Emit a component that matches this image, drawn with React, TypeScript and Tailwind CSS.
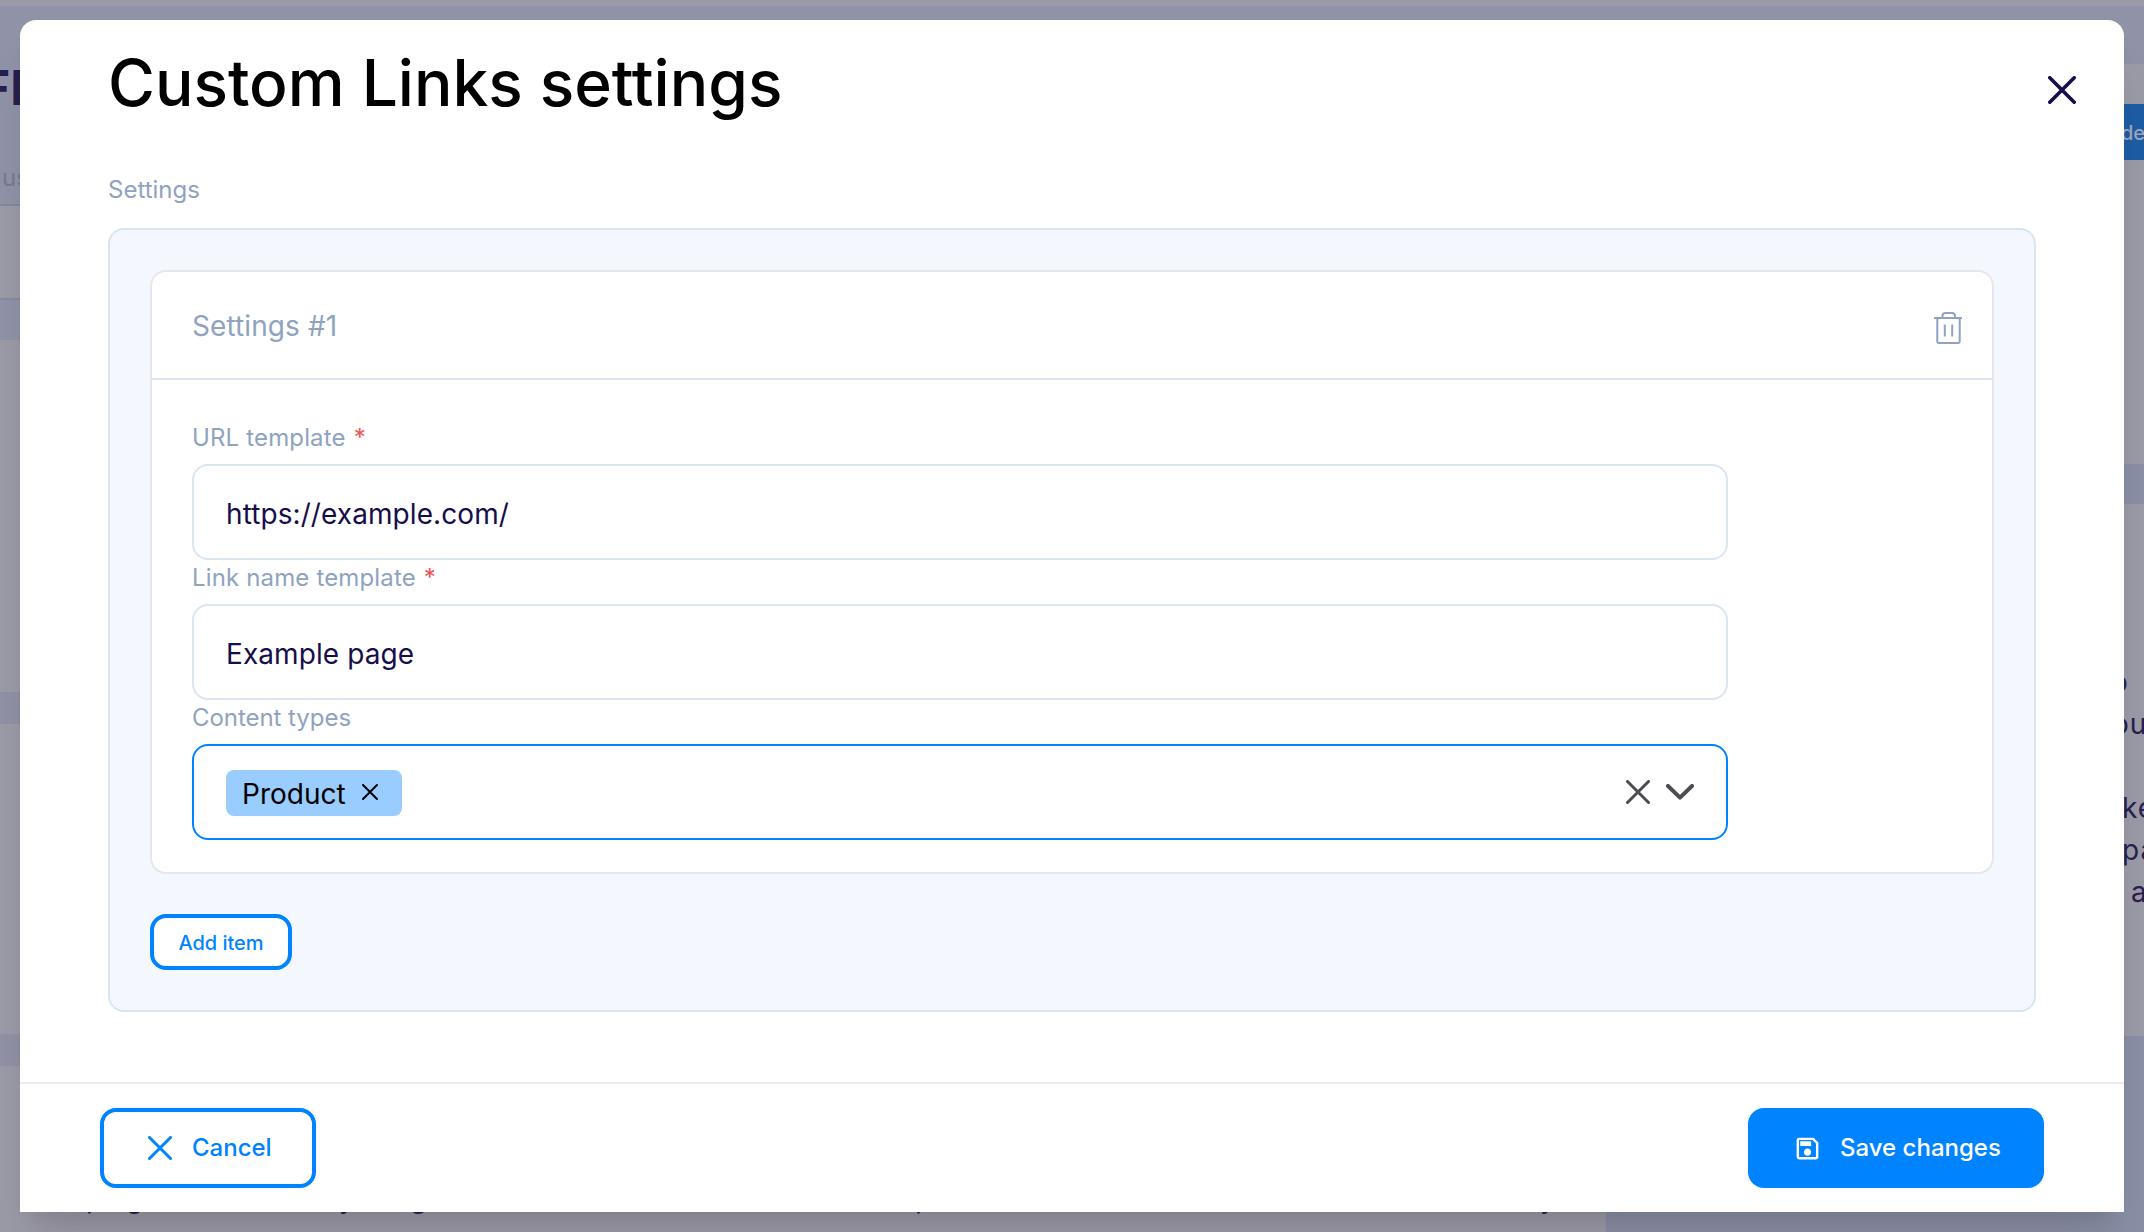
import { MdOutlineSave } from "react-icons/md";

function Cross({ size, stroke }: { size: number; stroke: number }) {
  const a = stroke / 2;
  const b = size - a;
  return (
    <svg width={size} height={size} viewBox={`0 0 ${size} ${size}`} fill="none" stroke="currentColor" strokeWidth={stroke} strokeLinecap="round" className="block shrink-0">
      <path d={`M${a} ${a}L${b} ${b}M${b} ${a}L${a} ${b}`} />
    </svg>
  );
}

function Trash() {
  return (
    <svg width="28" height="32" viewBox="0 0 28 32" fill="none" stroke="currentColor" strokeWidth="2" className="block shrink-0">
      <path d="M0 6H28" />
      <path d="M8.5 6V4a3 3 0 0 1 3-3h6.5a3 3 0 0 1 3 3v2" />
      <path d="M3.3 6V29.5a1.5 1.5 0 0 0 1.5 1.5H24.2a1.5 1.5 0 0 0 1.5-1.5V6" />
      <path d="M10.8 12.5V24.5M18.2 12.5V24.5" />
    </svg>
  );
}

function Chevron() {
  return (
    <svg width="28" height="16" viewBox="0 0 28 16" fill="none" stroke="currentColor" strokeWidth="4" strokeLinecap="round" strokeLinejoin="round" className="block shrink-0">
      <path d="M2 2L14 13.6L26 2" />
    </svg>
  );
}

function Label({ text, required }: { text: string; required?: boolean }) {
  return (
    <div className="h-11 pt-[2px] text-2xl leading-8 text-[#8fa3bf]">
      <span className={required ? "tracking-[0.15px]" : "tracking-[-0.05px]"}>{text}</span>
      {required && <span className="ml-2 text-[#f05252]">*</span>}
    </div>
  );
}

function TextField({ label, value }: { label: string; value: string }) {
  return (
    <div>
      <Label text={label} required />
      <div className="flex h-24 items-center rounded-2xl border-2 border-[#dae4f2] bg-white px-8 pt-1 text-[28px] leading-9 tracking-[0.08px] text-[#160e4b]">
        {value}
      </div>
    </div>
  );
}

const sideLines = [
  { text: "to", shift: "-ml-[23px]" },
  { text: "ou", shift: "-ml-[12px]" },
  { text: "", shift: "ml-0" },
  { text: "ke", shift: "-ml-[2px]" },
  { text: "pa", shift: "-ml-[2px]" },
  { text: "a", shift: "ml-[7px]" },
];

function Backdrop() {
  return (
    <div className="flex h-full flex-col bg-[#9b9aa7] text-[#262050]">
      <div className="h-1.5 shrink-0" />
      <div className="flex min-h-0 grow">
        <div className="flex w-5 shrink-0 flex-col overflow-hidden whitespace-nowrap">
          <div className="h-[200px] shrink-0 border-b-2 border-[#8288a0] bg-[#9092a8]">
            <div className="-ml-[18px] pt-[52px] text-5xl leading-[60px] font-bold">FI</div>
            <div className="ml-[2px] mt-[44px] text-2xl leading-8 text-[#737a95]">us</div>
          </div>
          <div className="h-[94px] shrink-0 border-b-2 border-[#878ba2]" />
          <div className="h-10 shrink-0 bg-[#9092a8]" />
          <div className="h-[352px] shrink-0" />
          <div className="h-8 shrink-0 bg-[#9191a6]" />
          <div className="h-[310px] shrink-0" />
          <div className="h-8 shrink-0 bg-[#9191a6]" />
        </div>
        <div className="flex grow flex-col">
          <div className="h-[58px] shrink-0 bg-[#9092a8]" />
          <div className="grow" />
          <div className="flex h-[36px] shrink-0">
            <div className="relative w-[1586px] shrink-0 text-[28px] leading-9">
              <span className="absolute -top-[16px] left-[66px]">p</span>
              <span className="absolute -top-[16px] left-[106px]">g</span>
              <span className="absolute -top-[16px] left-[319px]">y</span>
              <span className="absolute -top-[16px] left-[390px]">g</span>
              <span className="absolute -top-[16px] left-[895px]">p</span>
              <span className="absolute -top-[16px] left-[1520px]">y</span>
            </div>
            <div className="grow bg-[#8a8fa6]" />
          </div>
        </div>
        <div className="flex w-5 shrink-0 flex-col overflow-hidden whitespace-nowrap">
          <div className="h-[58px] shrink-0 bg-[#9092a8]" />
          <div className="h-10 shrink-0" />
          <div className="flex h-14 shrink-0 items-center bg-[#1d5ca5] pt-0.5 text-xl font-medium text-[#a2a7b9]">
            <span className="-ml-[3px]">de</span>
          </div>
          <div className="h-[304px] shrink-0" />
          <div className="h-10 shrink-0 bg-[#8a8fa6]" />
          <div className="h-[532px] shrink-0 pt-[157px] text-[28px] leading-[42px]">
            {sideLines.map((line, i) => (
              <div key={i} className={`h-[42px] tracking-[1px] ${line.shift}`}>{line.text}</div>
            ))}
          </div>
          <div className="grow bg-[#8a8fa6]" />
        </div>
      </div>
    </div>
  );
}

export default function App() {
  return (
    <div className="relative h-[1232px] w-[2144px] overflow-hidden font-['Inter',sans-serif]">
      <Backdrop />
      <div className="absolute inset-5 flex flex-col rounded-t-2xl bg-white shadow-[0_40px_50px_-10px_rgba(0,0,0,0.1),0_16px_20px_-12px_rgba(0,0,0,0.1)]">
        <div className="flex h-[144px] shrink-0 items-start justify-between pr-12 pl-[88px]">
          <h1 className="pt-[23px] text-[64px] leading-[80px] font-medium text-black">Custom Links settings</h1>
          <button className="mt-14 text-[#160e4b]"><Cross size={28} stroke={3.6} /></button>
        </div>
        <div className="flex grow flex-col px-[88px]">
          <div className="h-16 pt-[10px] text-2xl leading-8 text-[#8fa3bf]">Settings</div>
          <div className="h-[784px] rounded-2xl border-2 border-[#dae4f2] bg-[#f4f7fe] p-10">
            <div className="h-[604px] rounded-2xl border-2 border-[#e5e7eb] bg-white">
              <div className="flex h-[108px] items-center justify-between border-b-2 border-[#dae4f2] pr-[30px] pl-10 text-[#8fa3bf]">
                <span className="pt-0.5 text-[28px] leading-9 tracking-[0.1px]">Settings #1</span>
                <span className="pt-1.5"><Trash /></span>
              </div>
              <div className="flex w-[1616px] flex-col px-10 pt-10">
                <TextField label="URL template" value="https://example.com/" />
                <TextField label="Link name template" value="Example page" />
                <Label text="Content types" />
                <div className="flex h-24 items-center rounded-2xl border-2 border-[#0083ff] bg-white px-8">
                  <div className="mt-0.5 flex h-[46px] w-44 items-center rounded-lg bg-[#99ccff] pl-4 text-black">
                    <span className="w-[120px] pt-0.5 text-[28px] leading-9">Product</span>
                    <span className="-mt-0.5"><Cross size={16} stroke={2} /></span>
                  </div>
                  <div className="ml-auto flex items-center gap-4 text-[#4b4b52]">
                    <Cross size={24} stroke={3} />
                    <Chevron />
                  </div>
                </div>
              </div>
            </div>
            <button className="mt-10 flex h-14 w-[142px] items-center justify-center rounded-2xl border-4 border-[#0083ff] bg-white pt-0.5 text-xl font-medium text-[#0083ff]">
              Add item
            </button>
          </div>
        </div>
        <div className="flex h-[130px] shrink-0 items-start justify-between border-t-2 border-[#ebebf0] px-20 pt-6 text-2xl font-medium">
          <button className="flex h-20 w-[216px] items-center gap-5 rounded-2xl border-4 border-[#0083ff] pl-11 text-[#0083ff]">
            <Cross size={24} stroke={3} />
            Cancel
          </button>
          <button className="flex h-20 w-[296px] items-center rounded-2xl bg-[#0083ff] pl-[45px] text-white">
            <MdOutlineSave size={29} />
            <span className="ml-[18px]">Save changes</span>
          </button>
        </div>
      </div>
    </div>
  );
}
